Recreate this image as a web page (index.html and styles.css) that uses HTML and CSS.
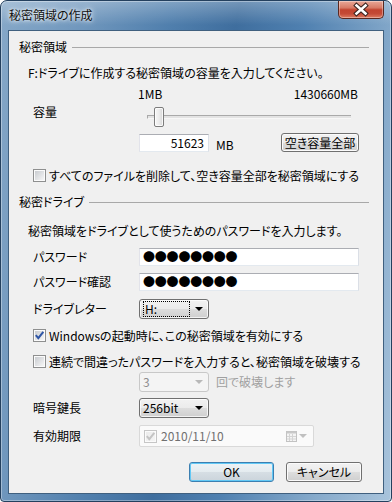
FILE: index.html
```html
<!DOCTYPE html>
<html lang="ja">
<head>
<meta charset="utf-8">
<title>秘密領域の作成</title>
<link rel="stylesheet" href="styles.css">
</head>
<body>
<div class="window">
  <div class="titlebar">
    <span class="title">秘密領域の作成</span>
    <div class="close">
      <svg width="44" height="17" viewBox="0 0 44 17">
        <path d="M17.5 4.5 L26.5 12.5 M26.5 4.5 L17.5 12.5" stroke="#3b2320" stroke-width="4.6" stroke-linecap="square" fill="none"/>
        <path d="M17.5 4.5 L26.5 12.5 M26.5 4.5 L17.5 12.5" stroke="#ffffff" stroke-width="2.6" stroke-linecap="square" fill="none"/>
      </svg>
    </div>
  </div>
  <div class="client">
    <div class="group-head g1"><span>秘密領域</span><i class="rule"></i></div>
    <p class="desc d1">F:ドライブに作成する秘密領域の容量を入力してください。</p>
    <div class="scale"><span>1MB</span><span>1430660MB</span></div>
    <div class="row cap">
      <span class="label lbl-top">容量</span>
      <div class="slider"><div class="track"></div><div class="thumb"></div></div>
    </div>
    <div class="row size">
      <span class="label"></span>
      <div class="textbox num">51623</div>
      <span class="unit">MB</span>
      <div class="btn fill">空き容量全部</div>
    </div>
    <div class="check c1"><span class="box"></span><span>すべてのファイルを削除して、空き容量全部を秘密領域にする</span></div>

    <div class="group-head g2"><span>秘密ドライブ</span><i class="rule"></i></div>
    <p class="desc d2">秘密領域をドライブとして使うためのパスワードを入力します。</p>
    <div class="row pw"><span class="label">パスワード</span><div class="textbox pass">●●●●●●●●</div></div>
    <div class="row pw2"><span class="label">パスワード確認</span><div class="textbox pass">●●●●●●●●</div></div>
    <div class="row drive"><span class="label">ドライブレター</span>
      <div class="combo"><span class="focus">H:</span><i class="arrow"></i></div>
    </div>
    <div class="check c2"><span class="box checked">
      <svg width="11" height="11" viewBox="0 0 11 11"><path d="M1.8 5.2 L4.3 8.2 L9.3 1.8" stroke="#2f56a6" stroke-width="2" fill="none"/></svg>
    </span><span>Windowsの起動時に、この秘密領域を有効にする</span></div>
    <div class="check c3"><span class="box"></span><span>連続で間違ったパスワードを入力すると、秘密領域を破壊する</span></div>
    <div class="row retry"><span class="label"></span>
      <div class="combo disabled"><span class="val">3</span><i class="arrow"></i></div>
      <span class="dis-text">回で破壊します</span>
    </div>
    <div class="row keylen"><span class="label">暗号鍵長</span>
      <div class="combo"><span class="val">256bit</span><i class="arrow"></i></div>
    </div>
    <div class="row expiry"><span class="label">有効期限</span>
      <div class="datepick">
        <span class="box mini">
          <svg width="11" height="11" viewBox="0 0 11 11"><path d="M1.8 5.2 L4.3 8.2 L9.3 1.8" stroke="#c4c4c4" stroke-width="2" fill="none"/></svg>
        </span>
        <span class="date">2010/11/10</span>
        <svg class="cal" width="11" height="11" viewBox="0 0 11 11">
          <rect x="0.5" y="0.5" width="10" height="10" fill="#f4f4f4" stroke="#c2c2c2"/>
          <rect x="0.5" y="0.5" width="10" height="2" fill="#c8c8c8"/>
          <path d="M3.5 3 V10 M6.5 3 V10 M1 5.5 H10 M1 8 H10" stroke="#d4d4d4" stroke-width="1"/>
        </svg>
        <i class="arrow dis"></i>
      </div>
    </div>
    <div class="buttons">
      <div class="btn ok">OK</div>
      <div class="btn cancel">キャンセル</div>
    </div>
  </div>
</div>
</body>
</html>
```

FILE: styles.css
```css
html, body {
  margin: 0;
  padding: 0;
  background: #ffffff;
}

body {
  font-family: "Noto Sans CJK JP", "Liberation Sans", sans-serif;
  font-size: 12px;
  line-height: 14px;
  font-feature-settings: "palt" 1;
  color: #000;
}

.window {
  width: 392px;
  height: 502px;
  box-sizing: border-box;
  border: 1px solid #24405e;
  border-radius: 7px 7px 4px 4px;
  padding: 0 7px 7px 7px;
  display: flex;
  flex-direction: column;
  background:
    linear-gradient(180deg, rgba(255,255,255,0.28) 0, rgba(255,255,255,0) 24px),
    linear-gradient(100deg, #86a8c8 0%, #7097bd 18%, #507fad 36%, #3f6e9e 50%, #4f80b0 64%, #86aacb 84%, #a9c4dc 100%);
  box-shadow: inset 0 0 0 1px rgba(255,255,255,0.35);
}

.titlebar {
  height: 29px;
  display: flex;
  align-items: flex-start;
}

.title {
  margin: 7px 0 0 1px;
  line-height: 14px;
  color: #101010;
  text-shadow: 0 0 6px #ffffff, 0 0 3px rgba(255,255,255,0.9);
}

.close {
  margin-left: auto;
  width: 46px;
  height: 18px;
  box-sizing: border-box;
  border: 1px solid #5a2820;
  border-top: none;
  border-radius: 0 0 5px 5px;
  background: linear-gradient(180deg, #e9a898 0%, #d77a66 40%, #c2432f 52%, #c44a36 75%, #de7c62 100%);
  box-shadow: inset 0 0 0 1px rgba(255,255,255,0.35);
  display: flex;
}

.close svg { display: block; }

.client {
  flex: 1;
  background: #f0f0f0;
  border: 1px solid #40607f;
  display: flex;
  flex-direction: column;
}

/* group headers */
.group-head {
  display: flex;
  align-items: center;
  height: 14px;
  padding-left: 10px;
  margin-right: 14px;
}
.group-head .rule {
  flex: 1;
  height: 1px;
  background: #a8a8a8;
  margin-left: 5px;
}
.g1 { margin-top: 9px; }
.g2 { margin-top: 13px; }

.desc {
  margin: 0;
  padding-left: 19px;
  height: 14px;
  white-space: nowrap;
}
.d1 { margin-top: 12px; }
.d2 { margin-top: 15px; }

.scale {
  margin-top: 7px;
  height: 14px;
  display: flex;
  justify-content: space-between;
  padding: 0 25px 0 129px;
}

.row {
  display: flex;
  align-items: center;
  padding-left: 24px;
}
.label {
  width: 106px;
  flex: none;
  white-space: nowrap;
}
.lbl-top { align-self: flex-start; margin-top: 1px; }

.cap { margin-top: 3px; height: 24px; align-items: flex-start; }
.size { margin-top: 5px; height: 19px; }
.pw { margin-top: 10px; height: 18px; }
.pw2 { margin-top: 7px; height: 18px; }
.drive { margin-top: 8px; height: 20px; }
.retry { margin-top: 4px; height: 20px; }
.keylen { margin-top: 6px; height: 20px; }
.expiry { margin-top: 7px; height: 22px; }

/* slider */
.slider {
  position: relative;
  width: 222px;
  height: 24px;
}
.track {
  margin: 11px 0 0 8px;
  width: 204px;
  height: 2px;
  border-top: 1px solid #a9a9a9;
  border-left: 1px solid #a9a9a9;
  border-bottom: 1px solid #f7f7f7;
  background: #e3e3e3;
  box-sizing: border-box;
  height: 4px;
}
.thumb {
  position: absolute;
  left: 15px;
  top: 3px;
  width: 10px;
  height: 20px;
  box-sizing: border-box;
  border: 1px solid #7c7c7c;
  border-radius: 2px;
  background: linear-gradient(90deg, #f6f6f6 0%, #ececec 50%, #d6d6d6 100%);
  box-shadow: inset 0 0 0 1px rgba(255,255,255,0.8);
}

/* text boxes */
.textbox {
  box-sizing: border-box;
  height: 18px;
  border: 1px solid;
  border-color: #abadb3 #dbdfe6 #e3e9ef #e2e3ea;
  background: #fff;
  display: flex;
  align-items: center;
  white-space: nowrap;
}
.num {
  width: 70px;
  justify-content: flex-end;
  padding-right: 4px;
  align-self: flex-start;
  margin-top: 1px;
}
.pass {
  width: 220px;
  padding-left: 3px;
  letter-spacing: -0.2px;
}
.unit {
  margin-left: 7px;
  align-self: flex-end;
}

/* buttons */
.btn {
  box-sizing: border-box;
  height: 20px;
  border: 1px solid #707070;
  border-radius: 3px;
  background: linear-gradient(180deg, #f2f2f2 0%, #ebebeb 50%, #dddddd 51%, #cfcfcf 100%);
  box-shadow: inset 0 0 0 1px #fbfbfb;
  display: flex;
  align-items: center;
  justify-content: center;
  white-space: nowrap;
}
.fill {
  width: 78px;
  height: 19px;
  margin-left: auto;
  margin-right: 24px;
}
.buttons {
  margin-top: 15px;
  display: flex;
  justify-content: flex-end;
  gap: 12px;
  padding-right: 21px;
}
.ok {
  width: 85px;
  border-color: #3c7fb1;
  box-shadow: inset 0 0 0 1px #62c9f6;
  background: linear-gradient(180deg, #eef3f6 0%, #e4ebef 50%, #d6dee4 51%, #cbd4db 100%);
}
.cancel { width: 76px; }

/* checkboxes */
.check {
  display: flex;
  align-items: center;
  gap: 3px;
  padding-left: 24px;
  height: 13px;
  white-space: nowrap;
}
.c1 { margin-top: 17px; }
.c2 { margin-top: 10px; }
.c3 { margin-top: 13px; }

.box {
  width: 13px;
  height: 13px;
  flex: none;
  box-sizing: border-box;
  border: 1px solid #8e8f8f;
  padding: 1px;
  background:
    linear-gradient(135deg, #c9ccd0 0%, #e4e5e7 60%, #f6f6f6 100%) content-box,
    linear-gradient(#fbfbfb, #fbfbfb) padding-box;
  position: relative;
}
.box svg {
  position: absolute;
  left: 0;
  top: 0;
}
.box.mini {
  border-color: #c6c6c6;
  background:
    linear-gradient(135deg, #ececec 0%, #f4f4f4 100%) content-box,
    linear-gradient(#fbfbfb, #fbfbfb) padding-box;
}

/* combo boxes */
.combo {
  box-sizing: border-box;
  width: 70px;
  height: 20px;
  border: 1px solid #707070;
  border-radius: 3px;
  background: linear-gradient(180deg, #f2f2f2 0%, #ebebeb 50%, #dddddd 51%, #cfcfcf 100%);
  box-shadow: inset 0 0 0 1px rgba(255,255,255,0.75);
  display: flex;
  align-items: center;
  padding-left: 3px;
}
.combo .val { line-height: 14px; }
.focus {
  box-sizing: border-box;
  width: 47px;
  height: 16px;
  border: 1px dotted #000;
  line-height: 14px;
  padding-left: 1px;
}
.arrow {
  margin-left: auto;
  margin-right: 5px;
  width: 0;
  height: 0;
  border-left: 4px solid transparent;
  border-right: 4px solid transparent;
  border-top: 4px solid #000;
}
.combo.disabled {
  border-color: #c8c8c8;
  background: #f4f4f4;
  box-shadow: none;
  color: #8d8d8d;
}
.combo.disabled .arrow { border-top-color: #b8b8b8; }
.dis-text {
  margin-left: 7px;
  color: #a0a0a0;
  white-space: nowrap;
}

/* date picker */
.datepick {
  box-sizing: border-box;
  width: 175px;
  height: 22px;
  border: 1px solid #d9d9d9;
  border-radius: 2px;
  background: #fafafa;
  display: flex;
  align-items: center;
  padding-left: 4px;
}
.date {
  margin-left: 4px;
  color: #707070;
}
.cal {
  margin-left: auto;
  display: block;
}
.arrow.dis {
  margin-left: 2px;
  margin-right: 6px;
  border-top-color: #c0c0c0;
}
```
